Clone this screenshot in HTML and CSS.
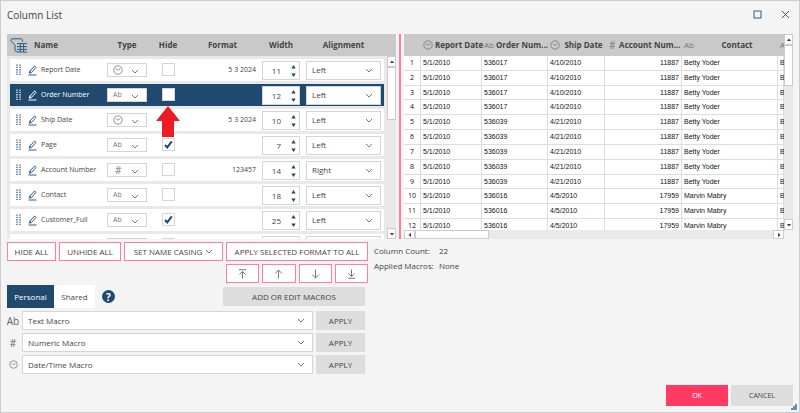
FILE: index.html
```html
<!DOCTYPE html>
<html lang="en">
<head>
  <meta charset="UTF-8">
  <meta name="viewport" content="width=device-width, initial-scale=1.0">
  <title>Column List</title>
  <link rel="stylesheet" href="styles.css">
</head>
<body>

  <!-- Shared icons -->
  <svg class="sprite" aria-hidden="true">
    <symbol id="clock" viewBox="0 0 10 10"><circle cx="5" cy="5" r="4.2"/><path d="M2.8 3.6 L5 5.2 L7.2 3.6"/></symbol>
    <symbol id="chevron" viewBox="0 0 8 5"><path d="M1 1 L4 4 L7 1"/></symbol>
    <symbol id="pencil" viewBox="0 0 9 11"><path d="M1.2 8.2 L1.8 6.2 L6.6 1 L8.1 2.4 L3.3 7.6 Z M1.8 6.2 L3.3 7.6 M0.5 10 H8.5"/></symbol>
    <symbol id="handle" viewBox="0 0 5 12"><path d="M1 0.5 V12 M4 0.5 V12" stroke-dasharray="1.3 1" stroke-width="1.3"/></symbol>
    <symbol id="spin" viewBox="0 0 5 12"><path d="M2.5 0 L4.7 3.6 H0.3 Z M0.3 8.4 H4.7 L2.5 12 Z"/></symbol>
    <symbol id="tri" viewBox="0 0 6 4"><path d="M3 0.5 L5.2 3 H0.8 Z"/></symbol>
  </svg>

  <div class="dialog">
    <header class="title-bar">
      <h1>Column List</h1>
      <div class="window-buttons">
        <button aria-label="Maximize"><svg width="9" height="9"><rect x="1" y="1" width="7" height="7"/></svg></button>
        <button aria-label="Close"><svg width="9" height="9"><path d="M1 1 L8 8 M8 1 L1 8"/></svg></button>
      </div>
    </header>

    <main class="panels">
      <section class="columns-panel">
        <table class="columns">
          <thead>
            <tr>
              <th class="filter"><svg class="filter-icon" viewBox="0 0 18 15"><path d="M2 0.8 H11.5 Q13.5 2.6 12 4 M2 0.8 Q0 2 1.5 3.6 L5 7.2 V12.6 L7.2 14 M7 5.6 H17 M7 8.6 H17 M7 11.4 H17 M7 14 H17 M10.3 5.6 V14 M13.6 5.6 V14"/></svg></th>
              <th class="name">Name</th>
              <th>Type</th>
              <th>Hide</th>
              <th class="format">Format</th>
              <th>Width</th>
              <th>Alignment</th>
            </tr>
          </thead>
          <tbody>
            <tr>
              <td><svg class="handle"><use href="#handle"/></svg></td>
              <td><svg class="pencil"><use href="#pencil"/></svg></td>
              <td class="name">Report Date</td>
              <td class="select type date"><select aria-label="Type"><option>Date</option></select><svg class="clock"><use href="#clock"/></svg><svg class="chevron"><use href="#chevron"/></svg></td>
              <td class="hide"><input type="checkbox" aria-label="Hide Report Date"></td>
              <td class="format">5 3 2024</td>
              <td class="width"><input type="number" aria-label="Width" value="11"><svg class="spin"><use href="#spin"/></svg></td>
              <td class="select align"><select aria-label="Alignment"><option>Left</option></select><svg class="chevron"><use href="#chevron"/></svg></td>
            </tr>
            <tr class="selected">
              <td><svg class="handle"><use href="#handle"/></svg></td>
              <td><svg class="pencil"><use href="#pencil"/></svg></td>
              <td class="name">Order Number</td>
              <td class="select type"><select aria-label="Type"><option>Ab</option></select><svg class="chevron"><use href="#chevron"/></svg></td>
              <td class="hide"><input type="checkbox" aria-label="Hide Order Number"><svg class="pointer" viewBox="0 0 24 31"><path d="M12 0 L24 15 H18 V31 H6 V15 H0 Z"/></svg></td>
              <td class="format"></td>
              <td class="width"><input type="number" aria-label="Width" value="12"><svg class="spin"><use href="#spin"/></svg></td>
              <td class="select align"><select aria-label="Alignment"><option>Left</option></select><svg class="chevron"><use href="#chevron"/></svg></td>
            </tr>
            <tr>
              <td><svg class="handle"><use href="#handle"/></svg></td>
              <td><svg class="pencil"><use href="#pencil"/></svg></td>
              <td class="name">Ship Date</td>
              <td class="select type date"><select aria-label="Type"><option>Date</option></select><svg class="clock"><use href="#clock"/></svg><svg class="chevron"><use href="#chevron"/></svg></td>
              <td class="hide"><input type="checkbox" aria-label="Hide Ship Date"></td>
              <td class="format">5 3 2024</td>
              <td class="width"><input type="number" aria-label="Width" value="10"><svg class="spin"><use href="#spin"/></svg></td>
              <td class="select align"><select aria-label="Alignment"><option>Left</option></select><svg class="chevron"><use href="#chevron"/></svg></td>
            </tr>
            <tr>
              <td><svg class="handle"><use href="#handle"/></svg></td>
              <td><svg class="pencil"><use href="#pencil"/></svg></td>
              <td class="name">Page</td>
              <td class="select type"><select aria-label="Type"><option>Ab</option></select><svg class="chevron"><use href="#chevron"/></svg></td>
              <td class="hide"><input type="checkbox" aria-label="Hide Page" checked><svg class="check" viewBox="0 0 9 9"><path d="M1 5 L3.2 7.4 L7.8 1.4"/></svg></td>
              <td class="format"></td>
              <td class="width"><input type="number" aria-label="Width" value="7"><svg class="spin"><use href="#spin"/></svg></td>
              <td class="select align"><select aria-label="Alignment"><option>Left</option></select><svg class="chevron"><use href="#chevron"/></svg></td>
            </tr>
            <tr>
              <td><svg class="handle"><use href="#handle"/></svg></td>
              <td><svg class="pencil"><use href="#pencil"/></svg></td>
              <td class="name">Account Number</td>
              <td class="select type number"><select aria-label="Type"><option>#</option></select><svg class="chevron"><use href="#chevron"/></svg></td>
              <td class="hide"><input type="checkbox" aria-label="Hide Account Number"></td>
              <td class="format">123457</td>
              <td class="width"><input type="number" aria-label="Width" value="14"><svg class="spin"><use href="#spin"/></svg></td>
              <td class="select align"><select aria-label="Alignment"><option>Right</option></select><svg class="chevron"><use href="#chevron"/></svg></td>
            </tr>
            <tr>
              <td><svg class="handle"><use href="#handle"/></svg></td>
              <td><svg class="pencil"><use href="#pencil"/></svg></td>
              <td class="name">Contact</td>
              <td class="select type"><select aria-label="Type"><option>Ab</option></select><svg class="chevron"><use href="#chevron"/></svg></td>
              <td class="hide"><input type="checkbox" aria-label="Hide Contact"></td>
              <td class="format"></td>
              <td class="width"><input type="number" aria-label="Width" value="18"><svg class="spin"><use href="#spin"/></svg></td>
              <td class="select align"><select aria-label="Alignment"><option>Left</option></select><svg class="chevron"><use href="#chevron"/></svg></td>
            </tr>
            <tr>
              <td><svg class="handle"><use href="#handle"/></svg></td>
              <td><svg class="pencil"><use href="#pencil"/></svg></td>
              <td class="name">Customer_Full</td>
              <td class="select type"><select aria-label="Type"><option>Ab</option></select><svg class="chevron"><use href="#chevron"/></svg></td>
              <td class="hide"><input type="checkbox" aria-label="Hide Customer_Full" checked><svg class="check" viewBox="0 0 9 9"><path d="M1 5 L3.2 7.4 L7.8 1.4"/></svg></td>
              <td class="format"></td>
              <td class="width"><input type="number" aria-label="Width" value="25"><svg class="spin"><use href="#spin"/></svg></td>
              <td class="select align"><select aria-label="Alignment"><option>Left</option></select><svg class="chevron"><use href="#chevron"/></svg></td>
            </tr>
            <tr>
              <td><svg class="handle"><use href="#handle"/></svg></td>
              <td><svg class="pencil"><use href="#pencil"/></svg></td>
              <td class="name"></td>
              <td class="select type"><select aria-label="Type"></select></td>
              <td class="hide"><input type="checkbox" aria-label="Hide"></td>
              <td class="format"></td>
              <td class="width"><input type="number" aria-label="Width"><svg class="spin"><use href="#spin"/></svg></td>
              <td class="select align"><select aria-label="Alignment"></select></td>
            </tr>
          </tbody>
        </table>
        <div class="scrollbar vertical">
          <button aria-label="Scroll up"><svg><use href="#tri"/></svg></button>
          <div class="thumb"></div>
          <button class="down" aria-label="Scroll down"><svg><use href="#tri"/></svg></button>
        </div>
      </section>

      <div class="splitter"></div>

      <section class="preview-panel">
        <div class="preview-view">
          <table class="preview">
            <colgroup>
              <col class="c-num"><col class="c-report"><col class="c-order"><col class="c-ship"><col class="c-account"><col class="c-contact"><col>
            </colgroup>
            <thead>
              <tr>
                <th></th>
                <th><div><svg class="clock"><use href="#clock"/></svg><span>Report Date</span></div></th>
                <th><div><i>Ab</i><span>Order Num...</span></div></th>
                <th><div><svg class="clock"><use href="#clock"/></svg><span>Ship Date</span></div></th>
                <th><div><i class="hash">#</i><span>Account Num...</span></div></th>
                <th><div><i>Ab</i><span>Contact</span></div></th>
                <th><div><i>A</i></div></th>
              </tr>
            </thead>
            <tbody>
              <tr><th>1</th><td>5/1/2010</td><td>536017</td><td>4/10/2010</td><td class="num">11887</td><td>Betty Yoder</td><td>B</td></tr>
              <tr><th>2</th><td>5/1/2010</td><td>536017</td><td>4/10/2010</td><td class="num">11887</td><td>Betty Yoder</td><td>B</td></tr>
              <tr><th>3</th><td>5/1/2010</td><td>536017</td><td>4/10/2010</td><td class="num">11887</td><td>Betty Yoder</td><td>B</td></tr>
              <tr><th>4</th><td>5/1/2010</td><td>536017</td><td>4/10/2010</td><td class="num">11887</td><td>Betty Yoder</td><td>B</td></tr>
              <tr><th>5</th><td>5/1/2010</td><td>536039</td><td>4/21/2010</td><td class="num">11887</td><td>Betty Yoder</td><td>B</td></tr>
              <tr><th>6</th><td>5/1/2010</td><td>536039</td><td>4/21/2010</td><td class="num">11887</td><td>Betty Yoder</td><td>B</td></tr>
              <tr><th>7</th><td>5/1/2010</td><td>536039</td><td>4/21/2010</td><td class="num">11887</td><td>Betty Yoder</td><td>B</td></tr>
              <tr><th>8</th><td>5/1/2010</td><td>536039</td><td>4/21/2010</td><td class="num">11887</td><td>Betty Yoder</td><td>B</td></tr>
              <tr><th>9</th><td>5/1/2010</td><td>536039</td><td>4/21/2010</td><td class="num">11887</td><td>Betty Yoder</td><td>B</td></tr>
              <tr><th>10</th><td>5/1/2010</td><td>536016</td><td>4/5/2010</td><td class="num">17959</td><td>Marvin Mabry</td><td>B</td></tr>
              <tr><th>11</th><td>5/1/2010</td><td>536016</td><td>4/5/2010</td><td class="num">17959</td><td>Marvin Mabry</td><td>B</td></tr>
              <tr><th>12</th><td>5/1/2010</td><td>536016</td><td>4/5/2010</td><td class="num">17959</td><td>Marvin Mabry</td><td>B</td></tr>
            </tbody>
          </table>
        </div>
        <div class="scrollbar vertical">
          <button aria-label="Scroll up"><svg><use href="#tri"/></svg></button>
          <div class="thumb"></div>
          <button class="down" aria-label="Scroll down"><svg><use href="#tri"/></svg></button>
        </div>
        <div class="scrollbar horizontal">
          <button class="left" aria-label="Scroll left"><svg><use href="#tri"/></svg></button>
          <div class="thumb"></div>
          <button class="right" aria-label="Scroll right"><svg><use href="#tri"/></svg></button>
        </div>
      </section>
    </main>

    <div class="lower">
      <div class="tools">
        <div class="actions">
          <button>HIDE ALL</button>
          <button>UNHIDE ALL</button>
          <button>SET NAME CASING <svg class="chevron"><use href="#chevron"/></svg></button>
          <button>APPLY SELECTED FORMAT TO ALL</button>
          <div class="moves">
            <button aria-label="Move to top"><svg viewBox="0 0 9 10"><path d="M1 0.7 H8 M4.5 9.5 V2.5 M1.5 5.5 L4.5 2.5 L7.5 5.5"/></svg></button>
            <button aria-label="Move up"><svg viewBox="0 0 9 10"><path d="M4.5 9.5 V1 M1 4.5 L4.5 1 L8 4.5"/></svg></button>
            <button aria-label="Move down"><svg viewBox="0 0 9 10"><path d="M4.5 0.5 V9 M1 5.5 L4.5 9 L8 5.5"/></svg></button>
            <button aria-label="Move to bottom"><svg viewBox="0 0 9 10"><path d="M1 9.3 H8 M4.5 0.5 V7.5 M1.5 4.5 L4.5 7.5 L7.5 4.5"/></svg></button>
          </div>
        </div>

        <div class="macro-bar">
          <div class="tabs">
            <button class="active">Personal</button>
            <button>Shared</button>
          </div>
          <button class="help" aria-label="Help">?</button>
          <button class="gray edit-macros">ADD OR EDIT MACROS</button>
        </div>

        <div class="macros">
          <label for="text-macro">Ab</label>
          <div class="select"><select id="text-macro"><option>Text Macro</option></select><svg class="chevron"><use href="#chevron"/></svg></div>
          <button class="gray">APPLY</button>

          <label for="numeric-macro">#</label>
          <div class="select"><select id="numeric-macro"><option>Numeric Macro</option></select><svg class="chevron"><use href="#chevron"/></svg></div>
          <button class="gray">APPLY</button>

          <label for="date-macro" aria-label="Date"><svg class="clock"><use href="#clock"/></svg></label>
          <div class="select"><select id="date-macro"><option>Date/Time Macro</option></select><svg class="chevron"><use href="#chevron"/></svg></div>
          <button class="gray">APPLY</button>
        </div>
      </div>

      <dl class="summary">
        <dt>Column Count:</dt><dd>22</dd>
        <dt>Applied Macros:</dt><dd>None</dd>
      </dl>
    </div>

    <footer>
      <button class="ok">OK</button>
      <button class="gray">CANCEL</button>
    </footer>
    <svg class="grip" viewBox="0 0 6 6"><path d="M4 0 H6 V6 H0 V4 H2 V2 H4 Z"/></svg>
  </div>

</body>
</html>
```
FILE: styles.css
```css
* {
  box-sizing: border-box;
}

body {
  margin: 0;
  font-family: "Open Sans", "Noto Sans", sans-serif;
  font-size: 8px;
  line-height: 12px;
  color: #444;
  background: #f4f4f4;
}

button,
input,
select {
  margin: 0;
  padding: 0;
  font: inherit;
  color: inherit;
  border: none;
  border-radius: 0;
  background: none;
  appearance: none;
}

svg {
  display: block;
  flex: none;
  fill: none;
  stroke: #777;
}

.sprite {
  position: absolute;
  width: 0;
  height: 0;
}

.dialog {
  position: relative;
  display: flex;
  flex-direction: column;
  min-height: 100vh;
  padding: 0 6px 6px;
  border: 1px solid #ccc;
}

/* Title bar */
.title-bar {
  display: flex;
  justify-content: space-between;
  align-items: center;
  height: 27px;
  margin-bottom: 6px;
}

h1 {
  margin: 0;
  font-size: 10px;
  font-weight: 400;
}

.window-buttons {
  display: flex;
  gap: 19px;
  padding-right: 3px;
}

.window-buttons button {
  display: block;
}

.window-buttons svg {
  stroke: #2c5b86;
}

/* Panels */
.panels {
  display: grid;
  grid-template-columns: 1fr 2px 1fr;
  gap: 3px;
  height: 205px;
}

.splitter {
  background: #ff7f99;
}

.columns-panel {
  position: relative;
  min-width: 0;
  overflow: hidden;
  background: #e9e9e9;
}

.columns,
.columns thead,
.columns tbody {
  display: block;
}

.columns tr {
  display: grid;
  align-items: center;
  height: 22px;
}

.columns thead tr {
  grid-template-columns: 24px 73px 40px 42px 1fr 50px 75px;
  padding: 0 15px 0 3px;
  background: #c9c9c9;
}

.columns th,
.columns td {
  padding: 0;
}

.columns th {
  font-weight: 700;
}

.columns th.name {
  text-align: left;
}

.columns th.filter {
  padding-left: 0;
}

.filter-icon {
  width: 18px;
  height: 15px;
  stroke: #2c5b86;
}

.columns tbody {
  padding: 3px 12px 0 3px;
}

.columns tbody tr {
  grid-template-columns: 18px 13px 66px 40px 43px 1fr 44px 78px;
  margin-bottom: 3px;
  background: #fff;
}

.columns td.name {
  font-size: 7px;
  white-space: nowrap;
}

.columns td.format {
  padding-right: 6px;
  font-size: 7px;
  text-align: right;
}

.columns tr.selected {
  color: #fff;
  background: #204a6d;
}

.handle {
  width: 5px;
  height: 12px;
  margin-left: 6px;
  stroke: #2c5b86;
}

.pencil {
  width: 9px;
  height: 11px;
  stroke: #2c5b86;
}

.selected .handle,
.selected .pencil {
  stroke: #fff;
}

.clock {
  width: 10px;
  height: 10px;
  stroke-width: 0.8;
}

.chevron {
  width: 8px;
  height: 5px;
}

.select {
  position: relative;
}

.select select {
  display: block;
  width: 100%;
  height: 19px;
  padding: 0 5px;
  color: #444;
  border: 1px solid #d5d5d5;
  background: #fff;
}

.select .chevron {
  position: absolute;
  top: 7px;
  right: 8px;
}

.select.type select {
  height: 14px;
  font-size: 7px;
  color: #777;
}

.select.type.date select {
  color: transparent;
}

.select.type.number select {
  padding: 0 7px;
  font-size: 10px;
}

.select.type .clock {
  position: absolute;
  top: 2px;
  left: 6px;
}

.select.type .chevron {
  top: 6px;
}

.select.align {
  margin-right: 3px;
}

.columns td.hide {
  position: relative;
  height: 22px;
  padding: 4px 15px;
}

.hide input {
  display: block;
  width: 13px;
  height: 13px;
  border: 1px solid #d5d5d5;
  background: #fff;
}

.check {
  position: absolute;
  top: 6px;
  left: 17px;
  width: 9px;
  height: 9px;
  stroke: #204a6d;
  stroke-width: 2;
}

.pointer {
  position: absolute;
  z-index: 1;
  top: 100%;
  left: 9px;
  width: 24px;
  height: 31px;
  fill: #ed1c24;
  stroke: none;
}

.width {
  position: relative;
  margin-right: 6px;
}

.width input {
  display: block;
  width: 100%;
  height: 19px;
  padding-right: 18px;
  font-size: 8px;
  text-align: right;
  color: #444;
  border: 1px solid #d5d5d5;
  background: #fff;
  appearance: textfield;
}

.width input::-webkit-inner-spin-button,
.width input::-webkit-outer-spin-button {
  margin: 0;
  appearance: none;
}

.spin {
  position: absolute;
  top: 4px;
  right: 4px;
  width: 5px;
  height: 12px;
  fill: #204a6d;
  stroke: none;
}

/* Scrollbars */
.scrollbar {
  display: flex;
  background: #e9e9e9;
}

.scrollbar.vertical {
  flex-direction: column;
}

.columns-panel .scrollbar {
  position: absolute;
  top: 22px;
  right: 0;
  bottom: 0;
  width: 9px;
}

.scrollbar button {
  display: flex;
  flex: none;
  align-items: center;
  justify-content: center;
  width: 9px;
  height: 11px;
  border: 1px solid #ccc;
  background: #fff;
}

.scrollbar svg {
  width: 6px;
  height: 4px;
  fill: #444;
  stroke: none;
}

.scrollbar .down {
  margin-top: auto;
}

.scrollbar .down svg {
  transform: rotate(180deg);
}

.scrollbar .left svg {
  transform: rotate(-90deg);
}

.scrollbar .right svg {
  transform: rotate(90deg);
}

.scrollbar .right {
  margin-left: auto;
}

.scrollbar.horizontal button {
  width: 11px;
  height: 9px;
}

.thumb {
  height: 53px;
  border: 1px solid #ccc;
  background: #fff;
}

/* Preview */
.preview-panel {
  display: grid;
  grid-template-columns: 1fr 9px;
  grid-template-rows: 1fr 9px;
  min-width: 0;
}

.preview-view {
  height: 196px;
  overflow: hidden;
  background: #fff;
}

.preview-panel .vertical .thumb {
  height: 41px;
}

.preview-panel .horizontal .thumb {
  width: 74px;
  height: 9px;
}

.preview {
  width: 100%;
  height: 200px;
  table-layout: fixed;
  border-collapse: separate;
  border-spacing: 0;
  font-family: "Liberation Sans", Arial, sans-serif;
  font-size: 7px;
  line-height: 8px;
  color: #111;
}

.c-num {
  width: 17px;
}

.c-report {
  width: 61px;
}

.c-order {
  width: 66px;
}

.c-ship {
  width: 57px;
}

.c-account {
  width: 77px;
}

.c-contact {
  width: 96px;
}

.preview thead th {
  height: 22px;
  padding: 0;
  font-family: "Open Sans", "Noto Sans", sans-serif;
  font-size: 8px;
  line-height: 12px;
  color: #444;
  background: #c9c9c9;
}

.preview thead div {
  display: flex;
  align-items: center;
  gap: 2px;
  padding-left: 2px;
  white-space: nowrap;
}

.preview thead span {
  flex: 1;
}

.preview thead i {
  font-style: normal;
  font-weight: 400;
  color: #777;
}

.preview thead .hash {
  padding-left: 2px;
  font-size: 10px;
}

.preview tbody td,
.preview tbody th {
  padding: 0 2px;
  border-right: 1px solid #ddd;
  border-bottom: 1px solid #ddd;
}

.preview tbody th {
  padding: 0;
  font-family: "Open Sans", "Noto Sans", sans-serif;
  font-weight: 400;
}

.preview td.num {
  text-align: right;
}

/* Lower area */
.lower {
  display: grid;
  grid-template-columns: minmax(0, 361px) 1fr;
  gap: 6px;
  padding-top: 3px;
}

.actions {
  display: grid;
  grid-template-columns: 49px 62px 99px 1fr;
  gap: 3px;
}

.actions button {
  display: flex;
  align-items: center;
  justify-content: center;
  gap: 3px;
  height: 19px;
  white-space: nowrap;
  border: 1px solid #ff8098;
  background: #fff;
}

.moves {
  display: grid;
  grid-column: 4;
  grid-template-columns: repeat(4, 1fr);
  gap: 3px;
}

.moves svg {
  width: 9px;
  height: 10px;
}

.macro-bar {
  display: flex;
  align-items: center;
  margin: 2px 3px 3px 0;
}

.tabs {
  display: flex;
}

.tabs button {
  width: 41px;
  height: 23px;
  background: #fff;
}

.tabs .active {
  width: 47px;
  color: #fff;
  background: #204a6d;
}

.help {
  width: 13px;
  height: 13px;
  margin-left: 7px;
  font-size: 10px;
  font-weight: 700;
  color: #fff;
  border-radius: 50%;
  background: #204a6d;
}

.gray {
  height: 19px;
  background: #ddd;
}

.edit-macros {
  width: 142px;
  margin-left: auto;
}

.macros {
  display: grid;
  grid-template-columns: 12px 1fr 49px;
  gap: 3px;
  margin-right: 3px;
}

.macros label {
  display: flex;
  align-items: center;
  justify-content: center;
  font-size: 10px;
  color: #666;
}

.macros .clock {
  width: 9px;
  height: 9px;
}

.summary {
  display: grid;
  grid-template-columns: 65px 1fr;
  row-gap: 3px;
  align-content: start;
  margin: 3px 0 0;
  white-space: nowrap;
}

.summary dd {
  margin: 0;
}

footer {
  display: flex;
  justify-content: flex-end;
  gap: 3px;
  margin-top: auto;
}

footer button {
  width: 62px;
  height: 21px;
  font-size: 7px;
}

footer .gray {
  height: 21px;
}

.ok {
  color: #fff;
  background: #ff3b63;
}

.grip {
  position: absolute;
  right: 2px;
  bottom: 2px;
  width: 6px;
  height: 6px;
  fill: #6d8ca8;
  stroke: none;
}
```
